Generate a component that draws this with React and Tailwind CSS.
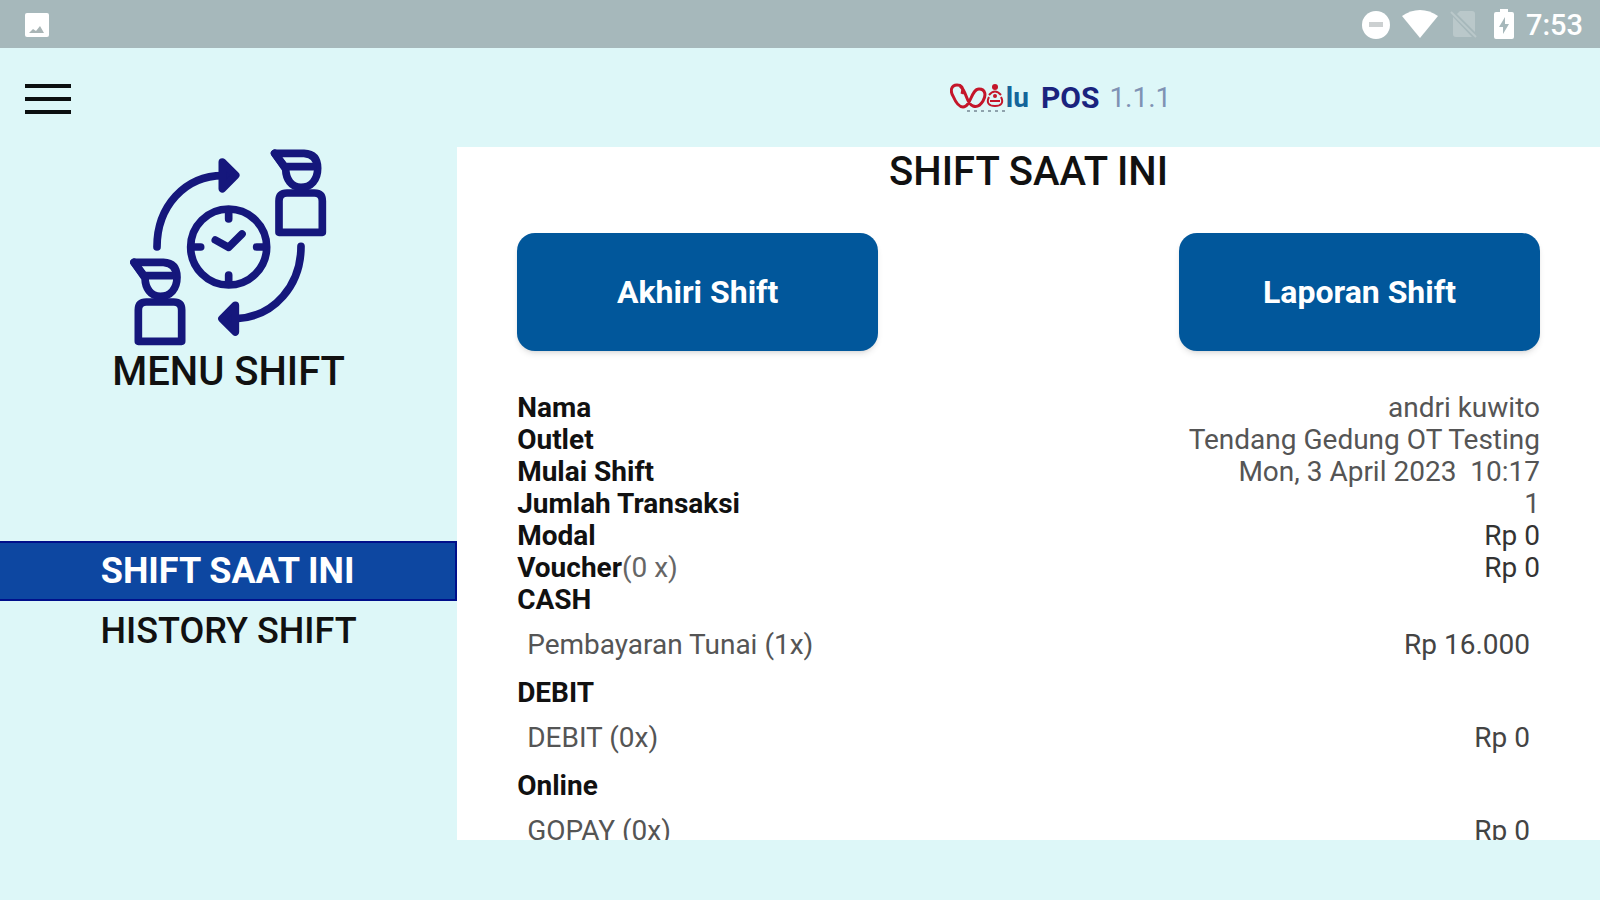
import React from 'react';

const INFO_ROWS = [
  { label: 'Nama', value: 'andri kuwito' },
  { label: 'Outlet', value: 'Tendang Gedung OT Testing' },
  { label: 'Mulai Shift', value: 'Mon, 3 April 2023  10:17' },
  { label: 'Jumlah Transaksi', value: '1' },
  { label: 'Modal', value: 'Rp 0', strong: true },
  { label: 'Voucher', note: '(0 x)', value: 'Rp 0', strong: true },
];

const PAYMENTS = [
  { group: 'CASH', name: 'Pembayaran Tunai (1x)', total: 'Rp 16.000' },
  { group: 'DEBIT', name: 'DEBIT (0x)', total: 'Rp 0' },
  { group: 'Online', name: 'GOPAY (0x)', total: 'Rp 0' },
];

const StatusBar = () => (
  <div className="flex h-12 shrink-0 items-center justify-between bg-[#a6b8bb] pr-[17px] pl-[25px]">
    <svg className="mt-0.5 h-6 w-6" viewBox="0 0 24 24">
      <rect width="24" height="24" rx="2" fill="#fff" />
      <path d="M4 20l4-4 3 2 4-5 4 7z" fill="#a9b5b6" />
    </svg>

    <div className="flex items-center text-white">
      <svg className="mt-0.5 h-7 w-7" viewBox="0 0 28 28">
        <circle cx="14" cy="14" r="14" fill="#fff" />
        <rect x="7" y="11" width="14" height="5" fill="#ccd0d1" />
      </svg>
      <svg className="ml-3 h-7 w-9" viewBox="0 0 36 28">
        <path d="M0 6C11-2 25-2 36 6L18 28z" fill="#fff" />
      </svg>
      <svg className="ml-3 h-7 w-7" viewBox="0 0 28 28">
        <path d="M10 1h12q3 0 3 3v18L7 4zM3 7l19 20H6q-3 0-3-3z" fill="#bac8ca" />
        <path d="M1 2l25 25" stroke="#bac8ca" strokeWidth="2" />
      </svg>
      <svg className="ml-4 h-[30px] w-5" viewBox="0 0 20 30">
        <path d="M6 0h8v3h4q2 0 2 2v23q0 2-2 2H2q-2 0-2-2V5q0-2 2-2h4z" fill="#fff" />
        <path d="M11 8l-6 10h4v7l6-10h-4z" fill="#a6b8bb" />
      </svg>
      <span className="mt-0.5 ml-3 text-[29px] leading-8 font-medium">7:53</span>
    </div>
  </div>
);

const Logo = () => (
  <div className="flex items-end">
    <svg className="h-8 w-[56px]" viewBox="0 0 56 32" fill="none">
      <path
        d="M12 12C14 5 11 3 7 3C1 3 0 9 3 14C6 21 9 25 13 25C21 25 21 7 29 7C36 7 36 14 33 19C30 24 26 25 23 24C16 22 17 9 10 4"
        stroke="#c4162a"
        strokeWidth="3"
      />
      <circle cx="45" cy="5" r="3" fill="#c4162a" />
      <path d="M39 13q6-7 12 0" stroke="#c4162a" strokeWidth="2" />
      <circle cx="45" cy="14" r="2" fill="#c4162a" />
      <path d="M39 15c-3 6 0 9 6 9s9-3 6-9M40 19h10" stroke="#c4162a" strokeWidth="2" />
      <path d="M17 29h39" stroke="#8fa3ad" strokeWidth="2" strokeDasharray="3 4" />
    </svg>
    <span className="text-[28px] leading-8 font-bold text-[#14659a]">lu</span>
  </div>
);

const Header = () => (
  <header className="flex h-[99px] shrink-0 items-center">
    <div className="w-2/7 pl-[25px]">
      <button type="button" aria-label="Menu" className="mt-0.5 block">
        <svg className="h-[30px] w-[46px]" viewBox="0 0 46 30" stroke="#0b0f10" strokeWidth="4">
          <path d="M0 2h46M0 15h46M0 28h46" />
        </svg>
      </button>
    </div>
    <div className="flex flex-1 items-center justify-center pl-16">
      <Logo />
      <span className="ml-3 text-[30px] leading-8 font-bold text-[#1a237e]">POS</span>
      <span className="ml-2.5 text-[28px] leading-8 text-[#7f92b4]">1.1.1</span>
    </div>
  </header>
);

const Worker = ({ transform }) => (
  <g transform={transform}>
    <path d="M103 397h88q41 2 41 45c0 35-20 57-50 57s-45-25-46-55z" />
    <path d="M103 397l30 40h85" />
    <path d="M116 634V540q0-24 24-24h82q24 0 24 24v94z" />
  </g>
);

const ShiftIcon = () => (
  <svg
    className="h-[200px] w-[200px]"
    viewBox="88 51 600 600"
    fill="none"
    stroke="#15177c"
    strokeWidth="23"
    strokeLinecap="round"
    strokeLinejoin="round"
  >
    <Worker />
    <Worker transform="translate(422 -327)" />
    <circle cx="387" cy="351" r="114" />
    <path d="M387 245v22M387 435v22M281 351h22M471 351h22" />
    <path d="M347 330l40 22 40-40" />
    <path d="M172 351C172 230 255 137 370 137" />
    <path d="M368 96l40 40-40 40z" fill="#15177c" />
    <path d="M604 349C604 465 525 560 410 566" />
    <path d="M407 526l-40 40 40 40z" fill="#15177c" />
  </svg>
);

const Sidebar = () => (
  <aside className="flex w-2/7 flex-col items-center">
    <ShiftIcon />
    <h2 className="mt-0.5 text-[40px] leading-[46px] font-medium">MENU SHIFT</h2>
    <nav className="mt-[146px] w-full text-[36px] leading-[56px]">
      <a
        href="#current"
        className="block border-y-2 border-r-2 border-[#00108b] bg-[#0d47a1] text-center font-bold text-white"
      >
        SHIFT SAAT INI
      </a>
      <a href="#history" className="block border-y-2 border-transparent text-center font-medium">
        HISTORY SHIFT
      </a>
    </nav>
  </aside>
);

const ActionButton = ({ children }) => (
  <button
    type="button"
    className="h-[118px] w-[361px] rounded-[18px] bg-[#01579b] text-[32px] leading-9 font-bold text-white shadow-md"
  >
    {children}
  </button>
);

const ShiftDetail = () => (
  <main className="min-w-0 flex-1 overflow-hidden bg-white px-[60px]">
    <h1 className="mt-0.5 text-center text-[40px] leading-[46px] font-medium">SHIFT SAAT INI</h1>

    <div className="mt-[38px] flex justify-between">
      <ActionButton>Akhiri Shift</ActionButton>
      <ActionButton>Laporan Shift</ActionButton>
    </div>

    <dl className="mt-[41px] text-[28px] leading-8">
      {INFO_ROWS.map((row) => (
        <div key={row.label} className="flex justify-between">
          <dt className="font-bold">
            {row.label}
            {row.note && <span className="font-normal text-[#666]">{row.note}</span>}
          </dt>
          <dd className={row.strong ? 'text-[#333]' : 'whitespace-pre text-[#555]'}>{row.value}</dd>
        </div>
      ))}
    </dl>

    {PAYMENTS.map((item) => (
      <section key={item.group} className="text-[28px] leading-8">
        <h3 className="font-bold">{item.group}</h3>
        <div className="flex h-[61px] items-center justify-between px-2.5 pb-1 text-[#555]">
          <span>{item.name}</span>
          <span className="text-[#444]">{item.total}</span>
        </div>
      </section>
    ))}
  </main>
);

const App = () => {
  return (
    <div className="flex h-screen flex-col bg-[#ddf7f8] pb-[60px] font-[Roboto,sans-serif] text-[#111]">
      <StatusBar />
      <Header />
      <div className="flex min-h-0 flex-1">
        <Sidebar />
        <ShiftDetail />
      </div>
    </div>
  );
};

export default App;
